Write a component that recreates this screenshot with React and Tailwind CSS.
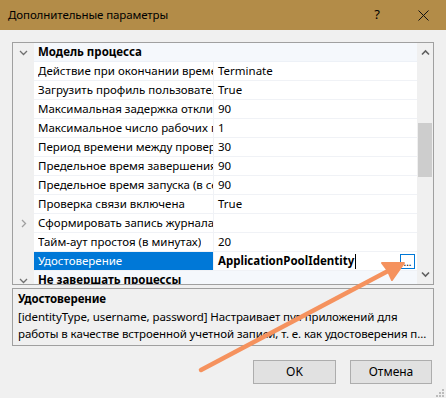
import React from "react";

const Chevron = ({ dir = "down" }) => (
  <svg width="9" height="9" viewBox="0 0 9 9" className="block">
    {dir === "down" ? (
      <polyline points="1,3 4.5,6.5 8,3" fill="none" stroke="#707070" strokeWidth="1.3" />
    ) : (
      <polyline points="3,1 6.5,4.5 3,8" fill="none" stroke="#a0a0a0" strokeWidth="1.3" />
    )}
  </svg>
);

const rows = [
  ["Действие при окончании времени простоя", "Terminate"],
  ["Загрузить профиль пользователя", "True"],
  ["Максимальная задержка отклика проверки связи (в секундах)", "90"],
  ["Максимальное число рабочих процессов", "1"],
  ["Период времени между проверками связи (в секундах)", "30"],
  ["Предельное время завершения (в секундах)", "90"],
  ["Предельное время запуска (в секундах)", "90"],
  ["Проверка связи включена", "True"],
  ["Сформировать запись журнала утилизации", "", true],
  ["Тайм-аут простоя (в минутах)", "20"],
];

function Category({ title }) {
  return (
    <div className="flex h-[19px] shrink-0">
      <div className="w-[21px] bg-[#f0f0f0] flex items-center justify-center">
        <Chevron dir="down" />
      </div>
      <div className="flex-1 bg-[#f5f8fc] border-b border-[#edf1f7] flex items-center pl-[4px] font-bold text-black">
        {title}
      </div>
    </div>
  );
}

function Row({ name, value, expander }) {
  return (
    <div className="flex h-[19px] shrink-0">
      <div className="w-[21px] bg-[#f0f0f0] flex items-center justify-center">
        {expander ? <Chevron dir="right" /> : null}
      </div>
      <div className="w-[180px] border-b border-r border-[#f0f2f6] bg-white flex items-center pl-[4px] overflow-hidden whitespace-nowrap text-black">
        <span className="block overflow-hidden">{name}</span>
      </div>
      <div className="flex-1 border-b border-[#f0f2f6] bg-white flex items-center pl-[4px] overflow-hidden whitespace-nowrap text-black">
        {value}
      </div>
    </div>
  );
}

export default function App() {
  return (
    <div
      className="relative w-[446px] h-[398px] bg-[#f0f0f0] overflow-hidden flex flex-col text-[11.5px]"
      style={{ fontFamily: '"Noto Sans", "Open Sans", sans-serif' }}
    >
      {/* Title bar */}
      <div className="h-[30px] bg-[#b38c48] flex items-center pl-[8px] text-[11.5px] text-black shrink-0">
        <span className="flex-1 tracking-[-0.1px]">Дополнительные параметры</span>
        <span className="w-[46px] text-center text-[13px]">?</span>
        <span className="w-[46px] flex items-center justify-center">
          <svg width="11" height="11" viewBox="0 0 11 11">
            <path d="M0.5 0.5 L10.5 10.5 M10.5 0.5 L0.5 10.5" stroke="#111" strokeWidth="1" />
          </svg>
        </span>
      </div>

      {/* Property grid */}
      <div className="mx-[12px] mt-[12px] h-[243px] border border-[#a0a0a0] bg-[#f0f0f0] flex shrink-0">
        <div className="flex-1 flex flex-col overflow-hidden">
          <Category title="Модель процесса" />
          {rows.map(([n, v, e], i) => (
            <Row key={i} name={n} value={v} expander={e} />
          ))}
          {/* selected row */}
          <div className="flex h-[19px] shrink-0">
            <div className="w-[21px] bg-[#f0f0f0]" />
            <div className="w-[180px] bg-[#0078d7] border-b border-r border-[#f0f2f6] flex items-center pl-[4px] text-white whitespace-nowrap overflow-hidden">
              Удостоверение
            </div>
            <div className="flex-1 bg-white border-b border-[#f0f2f6] flex items-center pl-[4px] font-bold text-black whitespace-nowrap">
              <span>ApplicationPoolIdentity</span>
              <span className="w-px h-[15px] bg-black ml-[1px]" />
              <span className="flex-1" />
              <span className="w-[15px] h-[15px] mr-[2px] border border-[#0078d7] bg-white flex items-end justify-center text-[10px] font-normal leading-[12px]">
                ...
              </span>
            </div>
          </div>
          <Category title="Не завершать процессы" />
        </div>
        {/* Scrollbar */}
        <div className="w-[16px] bg-[#f0f0f0] flex flex-col items-center">
          <div className="h-[17px] flex items-center justify-center mt-[1px]">
            <svg width="9" height="7" viewBox="0 0 9 7">
              <polyline points="1,5.5 4.5,2 8,5.5" fill="none" stroke="#606060" strokeWidth="1.6" />
            </svg>
          </div>
          <div className="h-[62px]" />
          <div className="w-[14px] h-[54px] bg-[#cdcdcd]" />
          <div className="flex-1" />
          <div className="h-[17px] flex items-center justify-center mb-[1px]">
            <svg width="9" height="7" viewBox="0 0 9 7">
              <polyline points="1,1.5 4.5,5 8,1.5" fill="none" stroke="#606060" strokeWidth="1.6" />
            </svg>
          </div>
        </div>
      </div>

      {/* Description */}
      <div className="mx-[12px] mt-[3px] h-[58px] border border-[#a0a0a0] bg-[#f0f0f0] pl-[5px] pt-[1px] text-black leading-[17.5px] shrink-0 overflow-hidden whitespace-nowrap tracking-[-0.1px]">
        <div className="font-bold">Удостоверение</div>
        <div>[identityType, username, password] Настраивает пул приложений для</div>
        <div>работы в качестве встроенной учетной записи, т. е. как удостоверения п...</div>
      </div>

      {/* Buttons */}
      <div className="flex justify-end gap-[14px] pr-[14px] mt-[14px]">
        <button className="w-[83px] h-[24px] bg-[#e1e1e1] border border-[#adadad] text-[12px] text-black">
          OK
        </button>
        <button className="w-[82px] h-[24px] bg-[#e1e1e1] border border-[#adadad] text-[12px] text-black">
          Отмена
        </button>
      </div>

      {/* Resize grip */}
      <svg className="absolute right-[2px] bottom-[1px]" width="9" height="9" viewBox="0 0 9 9">
        <rect x="7" y="1" width="2" height="2" fill="#bcbcbc" />
        <rect x="4" y="4" width="2" height="2" fill="#bcbcbc" />
        <rect x="7" y="4" width="2" height="2" fill="#bcbcbc" />
        <rect x="1" y="7" width="2" height="2" fill="#bcbcbc" />
        <rect x="4" y="7" width="2" height="2" fill="#bcbcbc" />
        <rect x="7" y="7" width="2" height="2" fill="#bcbcbc" />
      </svg>

      {/* Annotation arrow */}
      <svg className="absolute inset-0 pointer-events-none" width="446" height="398" viewBox="0 0 446 398">
        <line x1="201" y1="370" x2="388" y2="271" stroke="#f5925e" strokeWidth="4.5" strokeLinecap="round" />
        <polygon points="404,263 382,263 388,271 392,280" fill="#f5925e" stroke="#f5925e" strokeWidth="2" strokeLinejoin="round" />
      </svg>
    </div>
  );
}
